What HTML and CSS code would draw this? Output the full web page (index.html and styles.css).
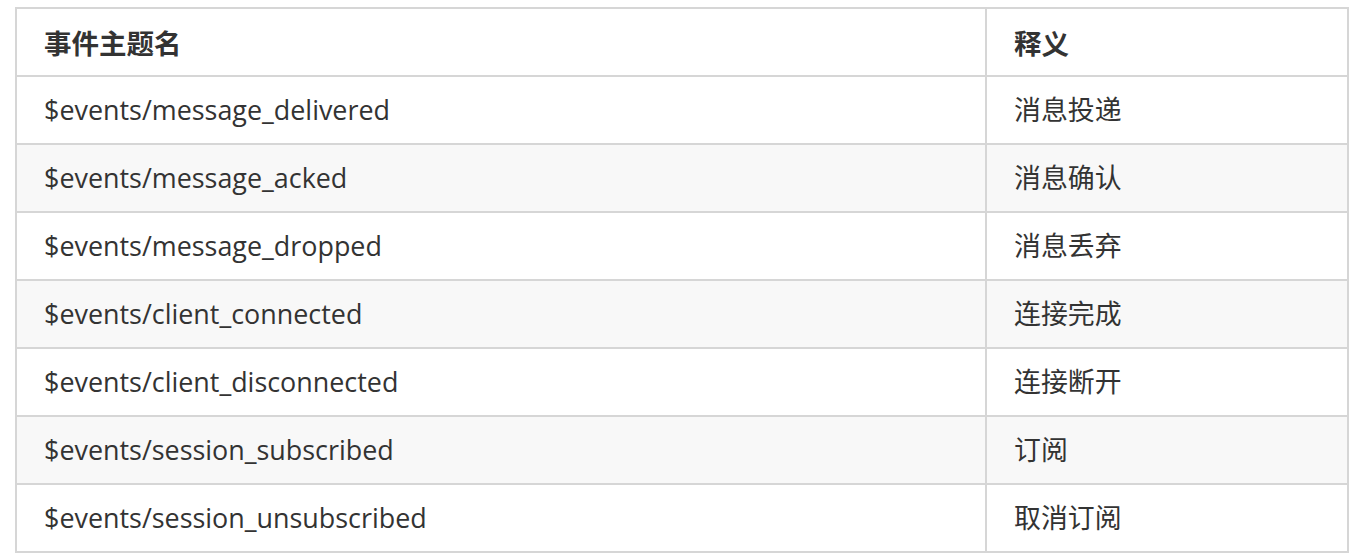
FILE: index.html
```html
<!DOCTYPE html>
<html lang="zh">
<head>
<meta charset="utf-8">
<link rel="stylesheet" href="styles.css">
</head>
<body>
<table class="events">
  <colgroup>
    <col class="col-topic">
    <col class="col-desc">
  </colgroup>
  <thead>
    <tr><th>事件主题名</th><th>释义</th></tr>
  </thead>
  <tbody>
    <tr><td>$events/message_delivered</td><td>消息投递</td></tr>
    <tr><td>$events/message_acked</td><td>消息确认</td></tr>
    <tr><td>$events/message_dropped</td><td>消息丢弃</td></tr>
    <tr><td>$events/client_connected</td><td>连接完成</td></tr>
    <tr><td>$events/client_disconnected</td><td>连接断开</td></tr>
    <tr><td>$events/session_subscribed</td><td>订阅</td></tr>
    <tr><td>$events/session_unsubscribed</td><td>取消订阅</td></tr>
  </tbody>
</table>
</body>
</html>
```

FILE: styles.css
```css
html, body {
  margin: 0;
  background: #ffffff;
}
body {
  padding: 7px 0 0 15px;
  font-family: "Open Sans", "Noto Sans CJK SC", sans-serif;
  font-size: 26.9px;
  color: #333333;
}
.events {
  border-collapse: collapse;
  table-layout: fixed;
  width: 1332px;
}
.col-topic { width: 970px; }
.col-desc { width: 362px; }
.events th,
.events td {
  border: 2px solid #d6d6d6;
  height: 66px;
  padding: 0 27px;
  text-align: left;
  vertical-align: middle;
  line-height: 1.2;
  white-space: nowrap;
}
.events th {
  font-family: "Noto Sans CJK SC", sans-serif;
  font-weight: 700;
  font-size: 27.5px;
  color: #333333;
}
.events tbody tr:nth-child(even) {
  background: #f8f8f8;
}
```
